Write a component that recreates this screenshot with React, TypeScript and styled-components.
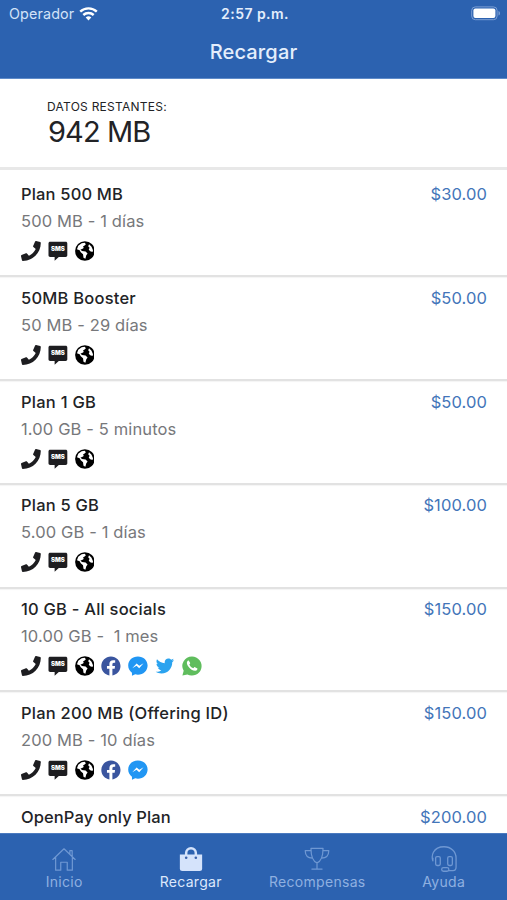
import React from 'react';
import styled, { createGlobalStyle } from 'styled-components';
import { FaPhone, FaFacebook, FaFacebookMessenger, FaTwitter } from 'react-icons/fa';

const Global = createGlobalStyle`
  * { box-sizing: border-box; }
  body { margin: 0; background: #fff; overflow: hidden; }
`;

const Screen = styled.div`
  width: 507px;
  height: 900px;
  display: flex;
  flex-direction: column;
  overflow: hidden;
  background: #fff;
  color: #222326;
  font-family: Inter, 'Liberation Sans', sans-serif;
`;

const Header = styled.header`
  height: 79px;
  flex: none;
  background: #2c62b0;
  color: #e4eefc;
  border-bottom: 1px solid #5f8bc9;
`;

const StatusBar = styled.div`
  height: 27px;
  display: grid;
  grid-template-columns: 1fr auto 1fr;
  align-items: center;
  padding: 1px 6px 0 9px;
  font-size: 14.3px;
  line-height: 26px;
`;

const Carrier = styled.div`
  display: flex;
  align-items: center;
  gap: 5px;
  color: #d3e2f8;
  letter-spacing: 0.15px;
`;

const Clock = styled.div`
  font-weight: 600;
  font-size: 14px;
  letter-spacing: 0.45px;
`;

const BatterySlot = styled.div`
  display: flex;
  justify-content: flex-end;
  padding-bottom: 1px;
`;

const Title = styled.h1`
  margin: 0;
  padding-top: 12px;
  text-align: center;
  font-size: 20px;
  font-weight: 500;
  line-height: 27px;
  letter-spacing: 0.15px;
`;

const Summary = styled.section`
  flex: none;
  height: 91px;
  padding: 19px 0 0 47px;
  border-bottom: 3px solid #e8e8e8;
`;

const SummaryLabel = styled.div`
  font-size: 12px;
  line-height: 17px;
  letter-spacing: 0.25px;
`;

const SummaryValue = styled.div`
  font-size: 29px;
  line-height: 34px;
  letter-spacing: -0.9px;
  padding-left: 1px;
`;

const List = styled.main`
  flex: 1;
  min-height: 0;
  overflow: hidden;
  padding-top: 3.5px;
`;

const Row = styled.article`
  height: 103.8px;
  padding: 7.5px 20px 0 21px;
  border-bottom: 2px solid #e2e2e2;
  box-shadow: 0 1px 1px rgba(0, 0, 0, 0.04);
`;

const RowTop = styled.div`
  display: flex;
  justify-content: space-between;
  font-size: 16.5px;
  line-height: 26px;
`;

const Name = styled.span<{ $spacing: number }>`
  font-weight: 500;
  letter-spacing: ${(p) => p.$spacing}px;
`;

const Price = styled.span`
  color: #4375b9;
  letter-spacing: 0.1px;
`;

const Detail = styled.div`
  color: #77787b;
  font-size: 16.5px;
  line-height: 28px;
  letter-spacing: 0.13px;
  white-space: pre;
`;

const Services = styled.div`
  display: flex;
  align-items: center;
  gap: 7px;
  margin-top: 6px;
  height: 20px;

  svg { display: block; width: 19.8px; height: 20px; flex: none; }
`;

const TabBar = styled.nav`
  flex: none;
  height: 67px;
  display: grid;
  grid-template-columns: repeat(4, 1fr);
  padding-left: 1px;
  background: #2c62b0;
  border-top: 1px solid #4b7abf;
`;

const Tab = styled.div<{ $active?: boolean }>`
  display: flex;
  flex-direction: column;
  align-items: center;
  padding-top: 12px;
  color: ${(p) => (p.$active ? '#dce8fc' : '#8fb0e0')};
  font-size: 14px;
  line-height: 18px;
  letter-spacing: 0.3px;

  svg {
    display: block;
    width: 26px;
    height: 26px;
    margin-bottom: 1px;
    color: ${(p) => (p.$active ? '#d5e3fb' : '#6f98d3')};
  }
`;

const WifiIcon = () => (
  <svg width="19" height="15" viewBox="0 0 19 15" fill="none" stroke="#fff" strokeWidth="2.4">
    <path d="M1.2 4.700a12 12 0 0 1 16.600 0M4.300 8a7.600 7.600 0 0 1 10.400 0" />
    <path d="M6.700 10.500a4.300 4.300 0 0 1 5.600 0L9.500 13.500Z" fill="#fff" stroke="none" />
  </svg>
);

const BatteryIcon = () => (
  <svg width="30" height="15" viewBox="0 0 30 15">
    <rect x=".7" y=".9" width="25.400" height="12.800" rx="3.600" fill="none" stroke="#7c9fd4" />
    <rect x="2.400" y="2.600" width="22" height="9.400" rx="2" fill="#fff" />
    <path d="M27.500 5v4.600c2-.6 2-4 0-4.600Z" fill="#7c9fd4" />
  </svg>
);

const SmsIcon = () => (
  <svg viewBox="0 0 20 20">
    <path d="M2.200.6h15.600c1 0 1.700.7 1.700 1.700v12c0 1-.7 1.700-1.700 1.700h-6.900l-4.200 3.800V16H2.200C1.200 16 .5 15.300.5 14.300v-12C.5 1.300 1.200.6 2.200.6Z" fill="#1d1d20" />
    <text x="10" y="10.500" fill="#fff" fontFamily="Inter, sans-serif" fontSize="6.200" fontWeight="900" textAnchor="middle" textLength="14" lengthAdjust="spacingAndGlyphs">SMS</text>
  </svg>
);

const GlobeIcon = () => (
  <svg viewBox="0 0 20 20">
    <circle cx="10" cy="10" r="9.900" fill="#000" />
    <path d="M2 8.200 3.300 4.800 6.700 2.100 9.800 1.700 11 3.200 9.400 4.700 8.200 5.300 8.800 6.900 7.200 8.100 5.500 8.400 7 9.900 10.700 10.600 12.700 12.500 11.300 14.500 10.500 17.800 8.600 16.700 8.100 13.200 5.800 11.300 4.700 9.300Z" fill="#fff" />
    <path d="M14.200 3.300 16.700 5.600 18.200 9.300 17.700 10.900 15.400 10.300 13.900 8.700 14.700 6.800 13.300 5.300Z" fill="#fff" />
  </svg>
);

const MessengerIcon = () => (
  <svg viewBox="0 0 20 20">
    <path d="M10 .3c5.700 0 9.800 4 9.800 9.200s-4.200 9.300-9.800 9.300c-1 0-1.900-.1-2.700-.4L4 19.800v-3C1.600 15.100.2 12.500.2 9.500.2 4.300 4.300.3 10 .3Z" fill="#2196f3" />
    <path d="M4.300 12.300 8.700 7.400l2.700 2.400 4.300-2.500-4.400 5-2.700-2.500Z" fill="#fff" />
  </svg>
);

const WhatsAppIcon = () => (
  <svg viewBox="0 0 20 20">
    <path d="M10.100.300a9.700 9.700 0 1 1-4.700 18.200L.400 19.700l1.300-4.800A9.700 9.700 0 0 1 10.100.300Z" fill="#5fbd5d" />
    <path d="M6.900 4.700c-.5-.3-1.100-.1-1.500.5-2.200 3.200 3.600 9.900 8.200 9.500 1.400-.2 2.100-1.200 2-2.300l-2.900-1.500c-.7.300-.9 1.500-1.700 1.200-1.700-.7-2.800-1.900-3.500-3.300-.2-.6.900-1.100.8-1.800Z" fill="#fff" />
  </svg>
);

const HomeIcon = () => (
  <svg viewBox="0 0 28 28" fill="none" stroke="currentColor" strokeWidth="1.300" strokeLinejoin="round" strokeLinecap="round">
    <path d="M2 14.500 14 3l12 11.500M5 12v14h5.500v-8.500h7V26H23V12M20.300 9V5h2.500v6.300" />
  </svg>
);

const BagIcon = () => (
  <svg viewBox="0 0 28 28">
    <path d="M8.800 10V7.500a5.200 5.200 0 0 1 10.400 0V10" fill="none" stroke="currentColor" strokeWidth="2.700" />
    <path d="M2 9.200h24v15a2.700 2.700 0 0 1-2.700 2.700H4.700A2.700 2.700 0 0 1 2 24.200Z" fill="currentColor" />
    <circle cx="8.800" cy="12.600" r="1.400" fill="#3a62aa" />
    <circle cx="19.200" cy="12.600" r="1.400" fill="#3a62aa" />
  </svg>
);

const TrophyIcon = () => (
  <svg viewBox="0 0 28 28" fill="none" stroke="currentColor" strokeWidth="1.300" strokeLinejoin="round" strokeLinecap="round">
    <path d="M7.500 2.500h13c0 8-1.300 13.800-6.500 15.700-5.200-1.900-6.500-7.700-6.500-15.700ZM14 18.200v6.600M8.500 24.800h11M7.600 5H1.300c.1 5 3 7.900 7.700 8M20.400 5h6.300c-.1 5-3 7.900-7.700 8" />
  </svg>
);

const HeadsetIcon = () => (
  <svg viewBox="0 0 28 28" fill="none" stroke="currentColor" strokeWidth="1.400" strokeLinejoin="round" strokeLinecap="round">
    <path d="M2 16c-1-3-1-6.200.6-9.200C4.700 2.800 9 .8 14 .8c7.500 0 13 5.300 13 12.200v9.700c0 2.200-1.200 3.800-3.300 3.800h-4.500M2 16v-3" />
    <rect x="5" y="11.500" width="5" height="9.500" rx="1.500" />
    <rect x="18" y="11.500" width="5" height="9.500" rx="1.500" />
    <rect x="11.500" y="23.200" width="7.700" height="4" rx="1.900" />
  </svg>
);

type Social = 'facebook' | 'messenger' | 'twitter' | 'whatsapp';

const socialIcons: Record<Social, React.ReactNode> = {
  facebook: <FaFacebook color="#3a559f" />,
  messenger: <MessengerIcon />,
  twitter: <FaTwitter color="#2aa3ef" viewBox="-20 -20 552 552" />,
  whatsapp: <WhatsAppIcon />,
};

interface Plan {
  name: string;
  detail: string;
  price: string;
  spacing: number;
  socials?: Social[];
}

const plans: Plan[] = [
  { name: 'Plan 500 MB', detail: '500 MB - 1 días', price: '$30.00', spacing: 0.17 },
  { name: '50MB Booster', detail: '50 MB - 29 días', price: '$50.00', spacing: 0.22 },
  { name: 'Plan 1 GB', detail: '1.00 GB - 5 minutos', price: '$50.00', spacing: 0.25 },
  { name: 'Plan 5 GB', detail: '5.00 GB - 1 días', price: '$100.00', spacing: 0.2 },
  { name: '10 GB - All socials', detail: '10.00 GB -  1 mes', price: '$150.00', spacing: 0.22, socials: ['facebook', 'messenger', 'twitter', 'whatsapp'] },
  { name: 'Plan 200 MB (Offering ID)', detail: '200 MB - 10 días', price: '$150.00', spacing: 0.22, socials: ['facebook', 'messenger'] },
  { name: 'OpenPay only Plan', detail: '', price: '$200.00', spacing: 0.1 },
];

const PlanRow = ({ plan }: { plan: Plan }) => (
  <Row>
    <RowTop>
      <Name $spacing={plan.spacing}>{plan.name}</Name>
      <Price>{plan.price}</Price>
    </RowTop>
    {plan.detail && (
      <>
        <Detail>{plan.detail}</Detail>
        <Services>
          <FaPhone color="#1d1d20" />
          <SmsIcon />
          <GlobeIcon />
          {plan.socials?.map((s) => <React.Fragment key={s}>{socialIcons[s]}</React.Fragment>)}
        </Services>
      </>
    )}
  </Row>
);

export default function App() {
  return (
    <Screen>
      <Global />
      <Header>
        <StatusBar>
          <Carrier>Operador <WifiIcon /></Carrier>
          <Clock>2:57 p.m.</Clock>
          <BatterySlot><BatteryIcon /></BatterySlot>
        </StatusBar>
        <Title>Recargar</Title>
      </Header>
      <Summary>
        <SummaryLabel>DATOS RESTANTES:</SummaryLabel>
        <SummaryValue>942 MB</SummaryValue>
      </Summary>
      <List>
        {plans.map((plan) => <PlanRow key={plan.name} plan={plan} />)}
      </List>
      <TabBar>
        <Tab><HomeIcon />Inicio</Tab>
        <Tab $active><BagIcon />Recargar</Tab>
        <Tab><TrophyIcon />Recompensas</Tab>
        <Tab><HeadsetIcon />Ayuda</Tab>
      </TabBar>
    </Screen>
  );
}
